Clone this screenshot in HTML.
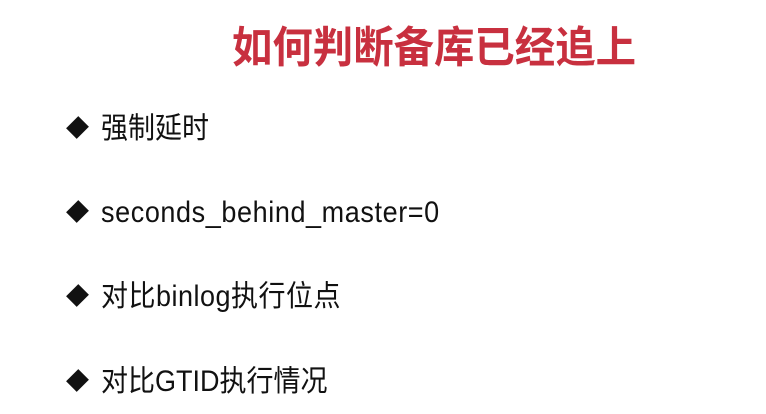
<!DOCTYPE html>
<html><head><meta charset="utf-8"><style>
html,body{margin:0;padding:0;background:#fff;width:766px;height:414px;overflow:hidden}
.t{position:absolute;left:232px;top:13px;font:bold 40px "Liberation Sans","Noto Sans CJK SC",sans-serif;color:#c8303f;white-space:nowrap;transform:scale(1.01,1.08);transform-origin:left top}
.i{position:absolute;left:66px;font:27px "Liberation Sans","Noto Sans CJK SC",sans-serif;color:#111;white-space:nowrap;line-height:30px}
.i span.x{display:inline-block;transform:scaleY(1.1);transform-origin:left center}
.d{display:inline-block;width:15px;height:15px;background:#111;transform:rotate(45deg) scaleY(1.15);margin:0 16px 4px 4px;vertical-align:middle}
</style></head><body>
<div class="t">如何判断备库已经追上</div>
<div class="i" style="top:113px"><span class="d"></span><span class="x">强制延时</span></div>
<div class="i" style="top:197px"><span class="d"></span><span class="x" style="letter-spacing:0.6px">seconds_behind_master=0</span></div>
<div class="i" style="top:281px"><span class="d"></span><span class="x" style="letter-spacing:0.5px">对比binlog执行位点</span></div>
<div class="i" style="top:366px"><span class="d"></span><span class="x">对比GTID执行情况</span></div>
</body></html>
